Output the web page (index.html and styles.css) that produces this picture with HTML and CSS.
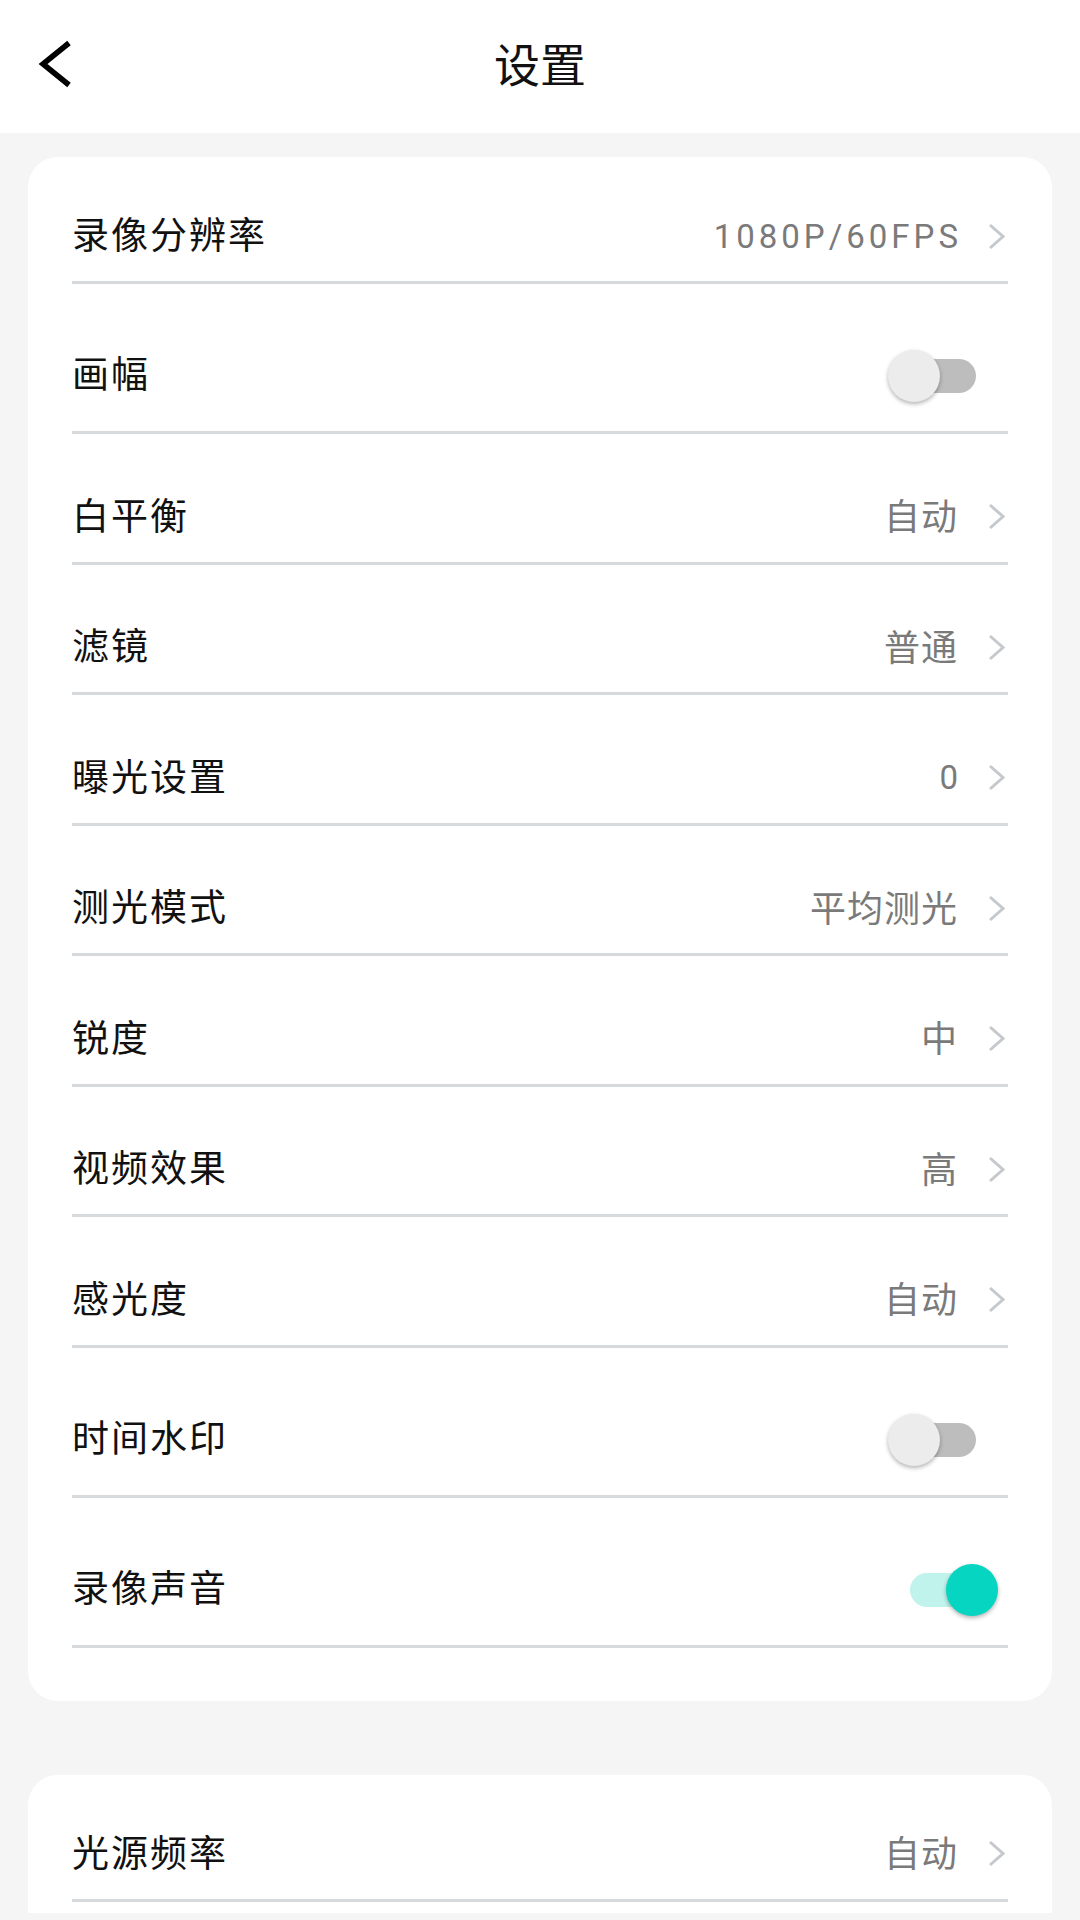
FILE: index.html
```html
<!DOCTYPE html>
<html lang="zh-CN">
<head>
    <meta charset="UTF-8">
    <meta name="viewport" content="width=device-width, initial-scale=1.0">
    <title>设置</title>
    <link rel="stylesheet" href="styles.css">
</head>
<body>
    <div class="app">
        <!-- Kopfzeile -->
        <div class="header">
            <svg class="back" width="40" height="56" viewBox="0 0 40 56">
                <polyline points="33,7 7,28 33,49" fill="none" stroke="#000" stroke-width="5.5"/>
            </svg>
            <div class="title">设置</div>
            <div></div>
        </div>

        <div class="content">
            <!-- Karte 1 -->
            <div class="card">
                <div class="row">
                    <div class="label">录像分辨率</div>
                    <div class="value num">1080P/60FPS</div>
                    <svg class="arrow" width="17" height="27" viewBox="0 0 17 27"><polyline points="2,2 15,13.5 2,25" fill="none" stroke="#c5c9cd" stroke-width="3"/></svg>
                </div>
                <div class="row switch-row">
                    <div class="label">画幅</div>
                    <div class="toggle"><div class="track"></div><div class="thumb"></div></div>
                </div>
                <div class="row">
                    <div class="label">白平衡</div>
                    <div class="value">自动</div>
                    <svg class="arrow" width="17" height="27" viewBox="0 0 17 27"><polyline points="2,2 15,13.5 2,25" fill="none" stroke="#c5c9cd" stroke-width="3"/></svg>
                </div>
                <div class="row">
                    <div class="label">滤镜</div>
                    <div class="value">普通</div>
                    <svg class="arrow" width="17" height="27" viewBox="0 0 17 27"><polyline points="2,2 15,13.5 2,25" fill="none" stroke="#c5c9cd" stroke-width="3"/></svg>
                </div>
                <div class="row">
                    <div class="label">曝光设置</div>
                    <div class="value num">0</div>
                    <svg class="arrow" width="17" height="27" viewBox="0 0 17 27"><polyline points="2,2 15,13.5 2,25" fill="none" stroke="#c5c9cd" stroke-width="3"/></svg>
                </div>
                <div class="row">
                    <div class="label">测光模式</div>
                    <div class="value">平均测光</div>
                    <svg class="arrow" width="17" height="27" viewBox="0 0 17 27"><polyline points="2,2 15,13.5 2,25" fill="none" stroke="#c5c9cd" stroke-width="3"/></svg>
                </div>
                <div class="row">
                    <div class="label">锐度</div>
                    <div class="value">中</div>
                    <svg class="arrow" width="17" height="27" viewBox="0 0 17 27"><polyline points="2,2 15,13.5 2,25" fill="none" stroke="#c5c9cd" stroke-width="3"/></svg>
                </div>
                <div class="row">
                    <div class="label">视频效果</div>
                    <div class="value">高</div>
                    <svg class="arrow" width="17" height="27" viewBox="0 0 17 27"><polyline points="2,2 15,13.5 2,25" fill="none" stroke="#c5c9cd" stroke-width="3"/></svg>
                </div>
                <div class="row">
                    <div class="label">感光度</div>
                    <div class="value">自动</div>
                    <svg class="arrow" width="17" height="27" viewBox="0 0 17 27"><polyline points="2,2 15,13.5 2,25" fill="none" stroke="#c5c9cd" stroke-width="3"/></svg>
                </div>
                <div class="row switch-row">
                    <div class="label">时间水印</div>
                    <div class="toggle"><div class="track"></div><div class="thumb"></div></div>
                </div>
                <div class="row switch-row">
                    <div class="label">录像声音</div>
                    <div class="toggle on"><div class="track"></div><div class="thumb"></div></div>
                </div>
            </div>

            <!-- Karte 2 -->
            <div class="card">
                <div class="row">
                    <div class="label">光源频率</div>
                    <div class="value">自动</div>
                    <svg class="arrow" width="17" height="27" viewBox="0 0 17 27"><polyline points="2,2 15,13.5 2,25" fill="none" stroke="#c5c9cd" stroke-width="3"/></svg>
                </div>
            </div>
        </div>
    </div>
</body>
</html>
```

FILE: styles.css
```css
body {
    margin: 0;
    background: #f5f5f5;
    font-family: "Noto Sans CJK SC", sans-serif;
}
.app {
    width: 1080px;
    height: 1913px;
    overflow: hidden;
    display: flex;
    flex-direction: column;
}
.header {
    height: 133px;
    box-sizing: border-box;
    padding-bottom: 5px;
    background: #fff;
    display: grid;
    grid-template-columns: 1fr auto 1fr;
    align-items: center;
}
.back {
    margin-left: 36px;
}
.title {
    font-size: 46px;
    line-height: 1;
    padding-bottom: 5px;
    color: #111;
}
.content {
    flex: 1;
    overflow: hidden;
    padding: 24px 28px 0;
}
.card {
    background: #fff;
    border-radius: 30px;
    padding: 0 44px 53px;
}
.card + .card {
    margin-top: 74px;
}
.row {
    display: flex;
    align-items: center;
    height: 90px;
    padding-top: 37.5px;
    border-bottom: 3px solid #d6dadd;
}
.row:first-child {
    padding-top: 34px;
}
.switch-row {
    height: 109.5px;
}
.label {
    flex: 1;
    font-size: 37px;
    line-height: 1;
    letter-spacing: 2px;
    padding-bottom: 5px;
    color: #111;
}
.switch-row .label {
    padding-bottom: 7px;
}
.value {
    font-size: 36px;
    line-height: 1;
    letter-spacing: 1px;
    padding-bottom: 5px;
    color: #7a7a7a;
}
.value.num {
    font-family: Roboto, sans-serif;
    font-size: 33px;
    letter-spacing: 4px;
    margin-right: -4px;
    padding-bottom: 0;
}
.arrow {
    margin-left: 30px;
    margin-right: 3px;
}
.toggle {
    position: relative;
    width: 110px;
    height: 52px;
    margin-right: 10px;
}
.toggle .track {
    position: absolute;
    left: 22px;
    top: 9px;
    width: 66px;
    height: 34px;
    border-radius: 17px;
    background: #bdbdbd;
}
.toggle .thumb {
    position: absolute;
    left: 0;
    top: 0;
    width: 52px;
    height: 52px;
    border-radius: 50%;
    background: #ececec;
    box-shadow: 0 2px 4px rgba(0, 0, 0, 0.3);
}
.toggle.on .track {
    background: #bff3ec;
}
.toggle.on .thumb {
    left: 58px;
    background: #06d6c1;
}
```
